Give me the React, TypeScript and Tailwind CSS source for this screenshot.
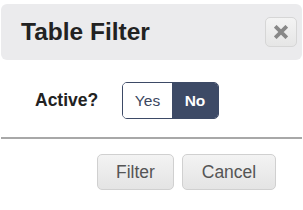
import React from "react";

export default function App() {
  return (
    <div className="w-[303px] h-[210px] bg-white overflow-hidden" style={{ fontFamily: '"Liberation Sans", Arial, sans-serif' }}>
      <div className="mx-[1px] mt-[4px] h-[56px] rounded-[6px] bg-[#ebebed] flex items-center justify-between pl-[20px] pr-[5px]">
        <div className="text-[24.5px] font-bold text-[#222] leading-none">Table Filter</div>
        <button className="w-[32px] h-[30px] rounded-[5px] border border-[#d6d6d6] bg-gradient-to-b from-[#f4f4f4] to-[#e6e6e6] flex items-center justify-center">
          <svg width="14" height="14" viewBox="0 0 12 12">
            <path d="M2.2 2.2 L9.8 9.8 M9.8 2.2 L2.2 9.8" stroke="#888" strokeWidth="3.2" strokeLinecap="square" />
          </svg>
        </button>
      </div>
      <div className="flex items-center mt-[22px] pl-[35px]">
        <div className="text-[17.5px] font-bold text-[#222] w-[87px]">Active?</div>
        <div className="flex h-[37px] rounded-[5px] border border-[#3d4a66] overflow-hidden">
          <div className="w-[49px] flex items-center justify-center text-[15.5px] text-[#3b4660] bg-white">Yes</div>
          <div className="w-[46px] flex items-center justify-center text-[15.5px] font-bold text-white bg-[#3d4a66]">No</div>
        </div>
      </div>
      <div className="mt-[18px] mx-[1px] h-[2px] bg-[#a8a8a8]" />
      <div className="flex justify-end gap-[8px] pr-[27px] mt-[15px]">
        <button className="w-[77px] h-[36px] rounded-[5px] border border-[#d0d0d0] bg-gradient-to-b from-[#f3f3f3] to-[#e4e4e4] text-[17.5px] text-[#555]">Filter</button>
        <button className="w-[94px] h-[36px] rounded-[5px] border border-[#d0d0d0] bg-gradient-to-b from-[#f3f3f3] to-[#e4e4e4] text-[17.5px] text-[#555]">Cancel</button>
      </div>
    </div>
  );
}
